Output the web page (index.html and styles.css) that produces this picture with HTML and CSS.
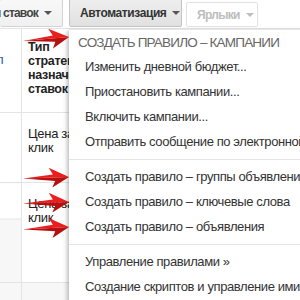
FILE: index.html
```html
<!DOCTYPE html>
<html>

<head>
    <meta name="viewport" content="width=device-width, initial-scale=1"/>
    <link rel="stylesheet" href="styles.css">
</head>

<body>
    <div class="page">
        <div class="toolbar">
            <div class="btn btn-clip"><span>Стратегия назначения ставок</span><i class="caret"></i></div>
            <div class="btn btn-active">Автоматизация<i class="caret"></i></div>
            <div class="btn btn-disabled">Ярлыки<i class="caret"></i></div>
        </div>

        <table class="grid">
            <tr class="head">
                <td class="side"><span class="link">л</span></td>
                <td class="main">Тип стратегии назначения ставок <i class="help"></i></td>
                <td></td>
            </tr>
            <tr class="row-1">
                <td class="side"></td>
                <td class="main">Цена за клик</td>
                <td></td>
            </tr>
            <tr class="row-2">
                <td class="side split"></td>
                <td class="main">Цена за клик</td>
                <td></td>
            </tr>
            <tr class="row-3">
                <td class="side"></td>
                <td class="main"></td>
                <td></td>
            </tr>
        </table>

        <div class="menu">
            <div class="menu-title">СОЗДАТЬ ПРАВИЛО – КАМПАНИИ</div>
            <div class="menu-item">Изменить дневной бюджет...</div>
            <div class="menu-item">Приостановить кампании...</div>
            <div class="menu-item">Включить кампании...</div>
            <div class="menu-item">Отправить сообщение по электронной почте...</div>
            <div class="menu-sep"></div>
            <div class="menu-item">Создать правило – группы объявлений</div>
            <div class="menu-item">Создать правило – ключевые слова</div>
            <div class="menu-item">Создать правило – объявления</div>
            <div class="menu-sep"></div>
            <div class="menu-item">Управление правилами »</div>
            <div class="menu-item">Создание скриптов и управление ими</div>
        </div>

        <svg class="arrows" width="300" height="300" viewBox="0 0 300 300">
            <defs>
                <path id="arrow-top" d="M-46,0 L-16,-3 L-20,-10 L0,0 Z"/>
                <path id="arrow-bottom" d="M-46,0 L0,0 L-17,10 L-14,3.5 Z"/>
                <g id="arrow">
                    <use href="#arrow-top" fill="#ec1d1d"/>
                    <use href="#arrow-bottom" fill="#b50f0f"/>
                </g>
            </defs>
            <use href="#arrow" transform="translate(69 37) rotate(-5)"/>
            <use href="#arrow" transform="translate(69 177) rotate(-2)"/>
            <use href="#arrow" transform="translate(69 202) rotate(-2)"/>
            <use href="#arrow" transform="translate(69 227) rotate(-3)"/>
        </svg>
    </div>
</body>

</html>
```

FILE: styles.css
```css
body {
    margin: 0;
    background: #fff;
    font-family: "Liberation Sans", Arial, sans-serif;
    color: #222;
}

.page {
    position: relative;
    width: 300px;
    height: 300px;
    overflow: hidden;
}

/* toolbar */

.toolbar {
    display: flex;
    align-items: flex-start;
    height: 28px;
}

.btn {
    display: flex;
    align-items: center;
    box-sizing: border-box;
    height: 27px;
    padding: 0 9px;
    border: 1px solid #d3d3d3;
    border-radius: 2px;
    background: linear-gradient(#f8f8f8, #f0f0f0);
    font-size: 12px;
    font-weight: bold;
    letter-spacing: -0.4px;
    color: #444;
    white-space: nowrap;
}

.btn-clip {
    width: 63px;
    margin-top: -1px;
    height: 28px;
    justify-content: flex-end;
    overflow: hidden;
    border-left: none;
    padding-right: 10px;
    letter-spacing: -0.8px;
}

.btn-active {
    margin-left: 6px;
    margin-top: -1px;
    height: 28px;
    width: 113px;
    padding-left: 10px;
    border-color: #c4c4c4;
    background: linear-gradient(#eeeeee, #e1e1e1);
    color: #333;
}

.btn-disabled {
    margin-left: 4px;
    margin-top: 2px;
    height: 25px;
    width: 72px;
    padding-left: 10px;
    border-color: #e2e2e2;
    background: #fff;
    color: #bdbdbd;
    letter-spacing: -0.7px;
}

.caret {
    display: inline-block;
    margin-left: 6px;
    border-top: 4px solid currentColor;
    border-left: 4px solid transparent;
    border-right: 4px solid transparent;
}

.btn-clip .caret,
.btn-active .caret {
    color: #555;
}

/* table behind the menu */

.grid {
    border-collapse: collapse;
    width: 300px;
    font-size: 13px;
    line-height: 14px;
    letter-spacing: -0.3px;
}

.grid td {
    border-top: 1px solid #e4e4e4;
    vertical-align: top;
    padding: 0;
}

.grid .side {
    width: 21px;
    border-right: 1px solid #e4e4e4;
    overflow: hidden;
}

.grid .main {
    width: 66px;
    padding: 14px 6px 0 6px;
}

.head td {
    height: 72px;
}

.head .main {
    padding-top: 11px;
    font-size: 12.5px;
    font-weight: bold;
    color: #222;
}

.row-1 td {
    height: 55px;
}

.row-2 td {
    height: 85px;
}

.row-3 td {
    height: 60px;
    background: #f7f7f7;
}

.split {
    background: linear-gradient(#fff 35px, #e4e4e4 35px, #e4e4e4 36px, #f7f7f7 36px);
}

.link {
    display: block;
    margin: 24px 0 0 -4px;
    color: #1b5fb5;
}

.help {
    display: inline-block;
    width: 5px;
    height: 11px;
    vertical-align: -2px;
    background: #c8c8c8;
}

/* dropdown menu */

.menu {
    position: absolute;
    top: 29px;
    left: 69px;
    width: 270px;
    height: 290px;
    background: #fff;
    border-top: 1px solid #e6e6e6;
    box-shadow: -2px 2px 4px rgba(0, 0, 0, 0.25);
    white-space: nowrap;
    font-size: 13px;
    letter-spacing: -0.4px;
    color: #333;
}

.menu-title {
    height: 24px;
    line-height: 25px;
    padding-left: 9px;
    font-size: 13.5px;
    letter-spacing: -0.8px;
    color: #666;
}

.menu-item {
    height: 25px;
    line-height: 25px;
    padding-left: 16px;
}

.menu-sep {
    height: 1px;
    margin: 5px 0 4px;
    background: #e5e5e5;
}

.arrows {
    position: absolute;
    top: 0;
    left: 0;
}
```
